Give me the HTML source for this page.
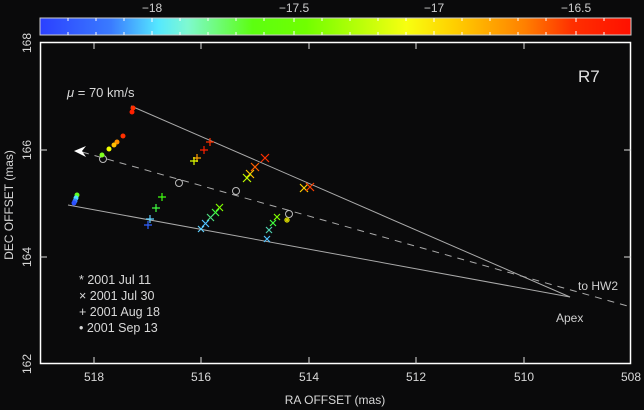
<!DOCTYPE html>
<html><head><meta charset="utf-8"><style>
html,body{margin:0;padding:0;background:#0a0a0b;}
svg{display:block;font-family:"Liberation Sans",sans-serif;}
</style></head><body>
<svg width="644" height="410" viewBox="0 0 644 410">
<defs>
<linearGradient id="cb" x1="0" x2="1">
<stop offset="0" stop-color="#2b40ff"/>
<stop offset="0.12" stop-color="#3a7bff"/>
<stop offset="0.2" stop-color="#55e8ff"/>
<stop offset="0.25" stop-color="#7ff9d0"/>
<stop offset="0.36" stop-color="#5cff10"/>
<stop offset="0.45" stop-color="#70ff00"/>
<stop offset="0.62" stop-color="#f8ff10"/>
<stop offset="0.7" stop-color="#ffd000"/>
<stop offset="0.82" stop-color="#ff8000"/>
<stop offset="0.9" stop-color="#ff3000"/>
<stop offset="1" stop-color="#ff1000"/>
</linearGradient>
</defs>
<g fill="#cfcfcf" font-size="12" text-anchor="middle">
<text x="152" y="12">−18</text>
<text x="294" y="12">−17.5</text>
<text x="434" y="12">−17</text>
<text x="576" y="12">−16.5</text>
</g>
<rect x="40" y="18" width="591" height="17" fill="url(#cb)" stroke="#ccc" stroke-width="1"/>
<g stroke="#fff" stroke-width="1">
<path d="M68,18v3M96,18v3M124,18v3M152,18v4M180,18v3M208,18v3M236,18v3M264,18v3M294,18v4M322,18v3M350,18v3M378,18v3M406,18v3M434,18v4M462,18v3M490,18v3M518,18v3M546,18v3M576,18v4M604,18v3"/>
<path d="M68,35v-3M96,35v-3M124,35v-3M152,35v-4M180,35v-3M208,35v-3M236,35v-3M264,35v-3M294,35v-4M322,35v-3M350,35v-3M378,35v-3M406,35v-3M434,35v-4M462,35v-3M490,35v-3M518,35v-3M546,35v-3M576,35v-4M604,35v-3"/>
</g>
<rect x="40.5" y="42.5" width="590" height="321" fill="none" stroke="#fff" stroke-width="1.5"/>
<g stroke="#ddd" stroke-width="1">
<line x1="94" y1="364" x2="94" y2="357"/><line x1="201" y1="364" x2="201" y2="357"/>
<line x1="309" y1="364" x2="309" y2="357"/><line x1="416" y1="364" x2="416" y2="357"/>
<line x1="524" y1="364" x2="524" y2="357"/>
<line x1="94" y1="43" x2="94" y2="49"/><line x1="201" y1="43" x2="201" y2="49"/>
<line x1="309" y1="43" x2="309" y2="49"/><line x1="416" y1="43" x2="416" y2="49"/>
<line x1="524" y1="43" x2="524" y2="49"/>
<line x1="40" y1="150" x2="47" y2="150"/><line x1="40" y1="257" x2="47" y2="257"/>
<line x1="631" y1="150" x2="624" y2="150"/><line x1="631" y1="257" x2="624" y2="257"/>
</g>
<g fill="#d8d8d8" font-size="12" text-anchor="middle">
<text x="94" y="381">518</text><text x="201" y="381">516</text><text x="309" y="381">514</text>
<text x="416" y="381">512</text><text x="524" y="381">510</text><text x="631" y="381">508</text>
<text transform="translate(31,43) rotate(-90)">168</text>
<text transform="translate(31,150) rotate(-90)">166</text>
<text transform="translate(31,257) rotate(-90)">164</text>
<text transform="translate(31,364) rotate(-90)">162</text>
<text x="335" y="404">RA OFFSET (mas)</text>
<text transform="translate(13,205) rotate(-90)">DEC OFFSET (mas)</text>
</g>
<g stroke="#aaa" stroke-width="1" fill="none">
<line x1="131" y1="106" x2="570" y2="297"/>
<line x1="68" y1="205" x2="570" y2="297"/>
<line x1="82" y1="152" x2="631" y2="307" stroke-dasharray="7,6"/>
</g>
<path d="M74,151 L86,146 L82,151 L86,157 Z" fill="#fff"/>
<text x="67" y="97" fill="#d8d8d8" font-size="13"><tspan font-style="italic">μ</tspan> = 70 km/s</text>
<text x="578" y="82" fill="#e0e0e0" font-size="17">R7</text>
<text x="578" y="290" fill="#d0d0d0" font-size="12">to HW2</text>
<text x="556" y="322" fill="#d0d0d0" font-size="12">Apex</text>
<g fill="#d8d8d8" font-size="12.5">
<text x="79" y="284">* 2001 Jul 11</text>
<text x="79" y="300">× 2001 Jul 30</text>
<text x="79" y="316">+ 2001 Aug 18</text>
<text x="79" y="332">• 2001 Sep 13</text>
</g>
<g stroke="#bbb" fill="none"><circle cx="103" cy="159" r="3.5"/><circle cx="179" cy="183" r="3.5"/><circle cx="236" cy="191" r="3.5"/><circle cx="289" cy="214" r="3.5"/></g>
<g>
<circle cx="133" cy="108" r="2.5" fill="#ff3000"/><circle cx="132" cy="112" r="2.5" fill="#ff2000"/>
<circle cx="123" cy="136" r="2.5" fill="#ff3000"/><circle cx="117" cy="142" r="2.5" fill="#ff9000"/>
<circle cx="114" cy="145" r="2.5" fill="#ffc000"/><circle cx="109" cy="149" r="2.5" fill="#f0ff00"/>
<circle cx="102" cy="155" r="2.5" fill="#80ff20"/>
<circle cx="77" cy="195" r="2.5" fill="#60ff20"/><circle cx="76" cy="198" r="2.5" fill="#50e0ff"/>
<circle cx="75" cy="201" r="2.5" fill="#3a80ff"/><circle cx="74" cy="203" r="2.5" fill="#2b50ff"/>
</g>
<g stroke-width="1.2" fill="none">
<path d="M206,142h8M210,138v8" stroke="#ff3000"/><path d="M200,150h8M204,146v8" stroke="#ff2000"/>
<path d="M193,158h8M197,154v8" stroke="#ffa000"/><path d="M190,161h8M194,157v8" stroke="#e0ff00"/>
<path d="M158,197h8M162,193v8" stroke="#40ff10"/><path d="M152,208h8M156,204v8" stroke="#40ff40"/>
<path d="M146,219h8M150,215v8" stroke="#60d0ff"/><path d="M144,225h8M148,221v8" stroke="#3060ff"/>
<path d="M261,154l8,8M269,154l-8,8" stroke="#ff3000"/><path d="M251,163l8,8M259,163l-8,8" stroke="#ff6000"/>
<path d="M246,170l8,8M254,170l-8,8" stroke="#ffc000"/><path d="M243,174l8,8M251,174l-8,8" stroke="#c0ff00"/>
<path d="M300,184l8,8M308,184l-8,8" stroke="#ffd000"/><path d="M306,183l8,8M314,183l-8,8" stroke="#ff4000"/>
<path d="M216,204l7,7M223,204l-7,7" stroke="#80ff00"/><path d="M212,209l7,7M219,209l-7,7" stroke="#40ff40"/>
<path d="M207,214l7,7M214,214l-7,7" stroke="#50e080"/><path d="M202,220l7,7M209,220l-7,7" stroke="#50c0ff"/>
<path d="M198,226l6,6M204,226l-6,6" stroke="#60d0ff"/>
<path d="M274,214l6,6M280,214l-6,6" stroke="#80ff00"/><path d="M270,220l6,6M276,220l-6,6" stroke="#40ff40"/>
<path d="M266,227l6,6M272,227l-6,6" stroke="#50d0b0"/><path d="M264,236l6,6M270,236l-6,6" stroke="#50c0ff"/>
<path d="M284,220l6,0M287,217v6M285,218l4,4M289,218l-4,4" stroke="#d0d000"/>
</g>
</svg>
</body></html>
